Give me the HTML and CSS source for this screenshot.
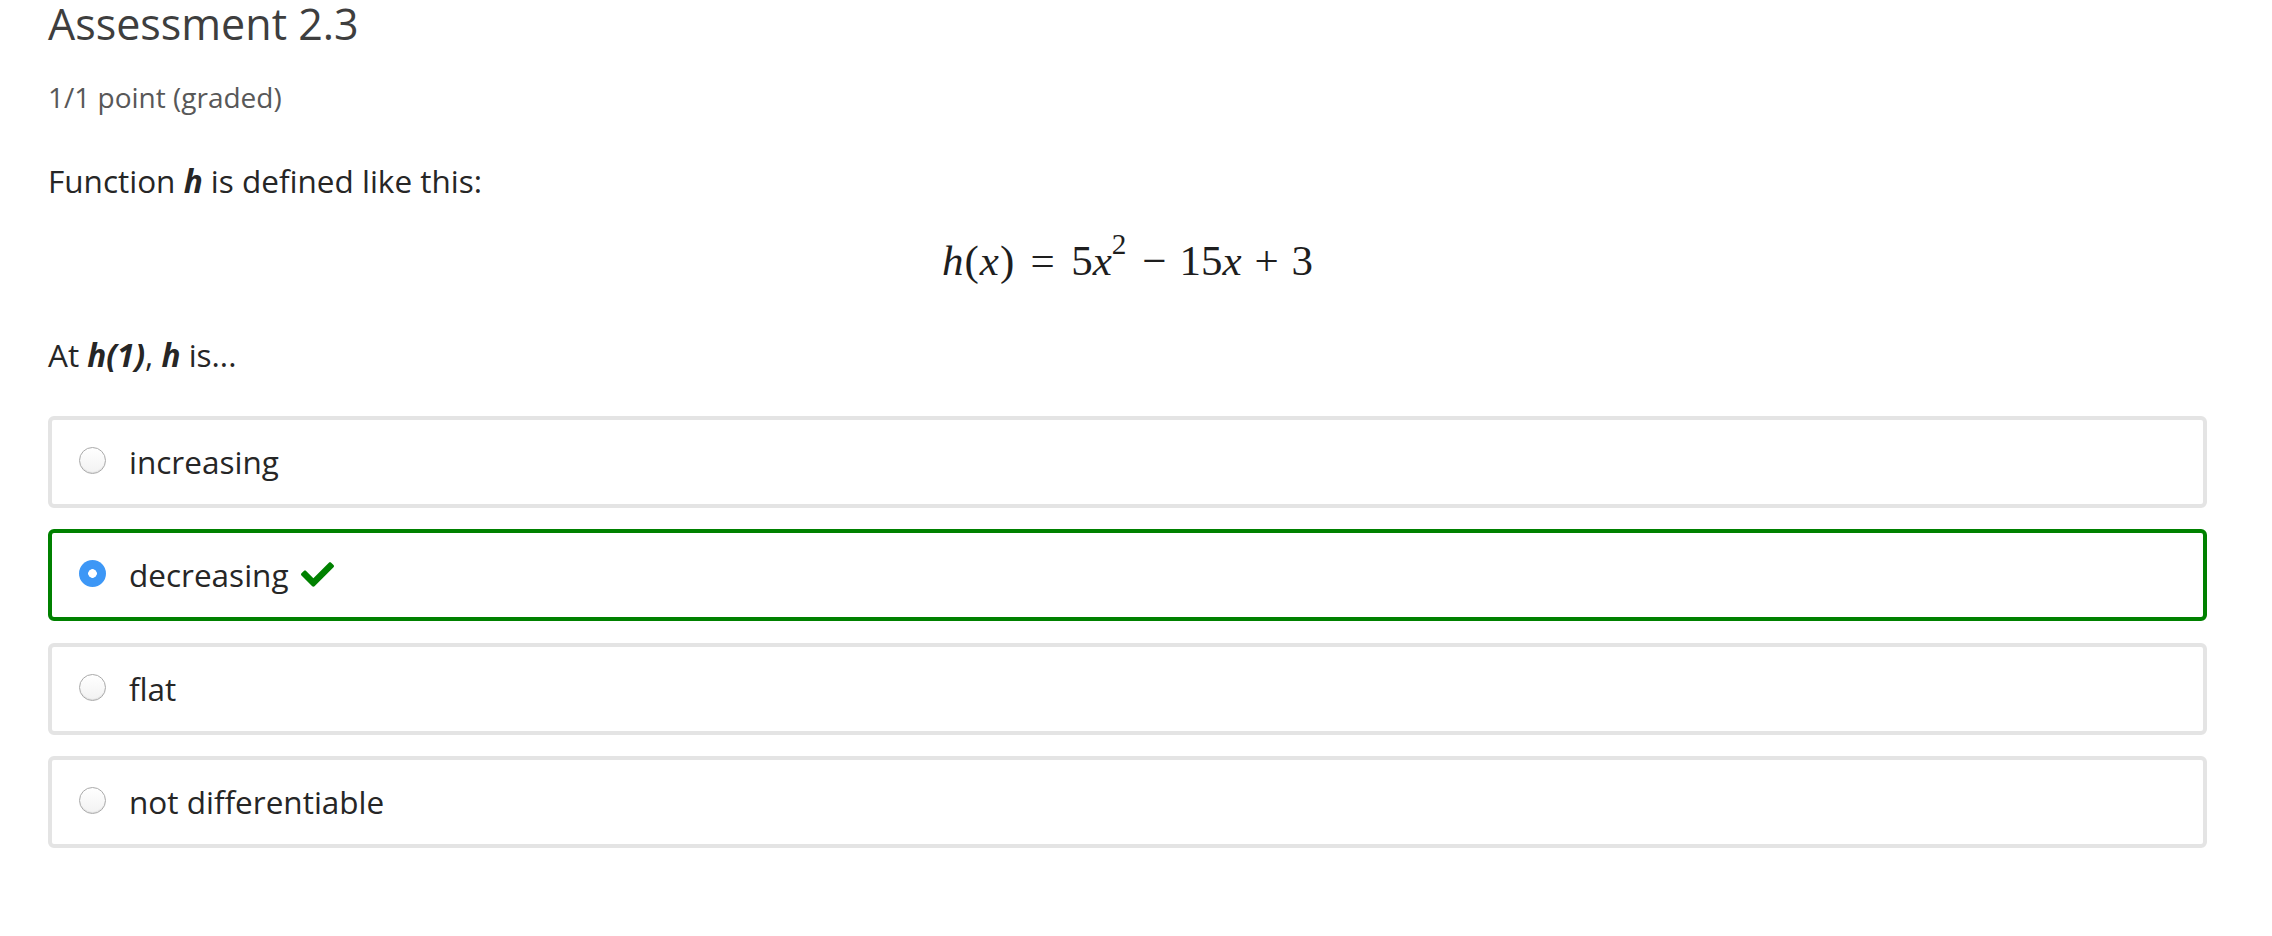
FILE: index.html
```html
<!DOCTYPE html>
<html lang="en">
<head>
<meta charset="utf-8">
<title>Assessment 2.3</title>
<link rel="stylesheet" href="styles.css">
</head>
<body>
<div class="problem">
  <h2 class="problem-title">Assessment 2.3</h2>
  <div class="problem-progress">1/1 point (graded)</div>
  <p class="prompt">Function <b><i>h</i></b> is defined like this:</p>
  <div class="equation"><span class="mi">h</span><span class="mp">(</span><span class="mi">x</span><span class="mp">)</span><span class="rel">=</span><span>5</span><span class="mi">x</span><span class="sup">2</span><span class="op">−</span><span>15</span><span class="mi">x</span><span class="op">+</span><span>3</span></div>
  <p class="prompt question">At <b><i>h(1)</i></b>, <b><i>h</i></b> is...</p>
  <div class="choices">
    <label class="choice">
      <span class="radio"></span>
      <span class="choice-text">increasing</span>
    </label>
    <label class="choice choice-correct">
      <span class="radio radio-checked"></span>
      <span class="choice-text">decreasing</span>
      <svg class="check" viewBox="0 64 512 384" width="33" height="25" aria-hidden="true"><path fill="#008100" d="M173.898 439.404l-166.4-166.4c-9.997-9.997-9.997-26.206 0-36.204l36.203-36.204c9.997-9.998 26.207-9.998 36.204 0L192 312.69 432.095 72.596c9.997-9.997 26.207-9.997 36.204 0l36.203 36.204c9.997 9.997 9.997 26.206 0 36.204l-294.4 294.401c-9.998 9.997-26.207 9.997-36.204-.001z"/></svg>
    </label>
    <label class="choice">
      <span class="radio"></span>
      <span class="choice-text">flat</span>
    </label>
    <label class="choice">
      <span class="radio"></span>
      <span class="choice-text">not differentiable</span>
    </label>
  </div>
</div>
</body>
</html>
```

FILE: styles.css
```css
html, body {
  margin: 0;
  padding: 0;
  background: #ffffff;
}

body {
  font-family: "Open Sans", "Noto Sans", sans-serif;
  color: #313131;
}

.problem {
  padding: 0 65px 0 48px;
}

.problem-title {
  margin: 0;
  font-size: 43px;
  font-weight: 400;
  line-height: 48px;
  color: #3e3e3e;
}

.problem-progress {
  margin-top: 29px;
  font-size: 28px;
  line-height: 40px;
  color: #585858;
}

.prompt {
  margin: 40px 0 0 0;
  font-size: 31.5px;
  line-height: 48px;
  color: #262626;
}

.prompt b {
  font-weight: 700;
}

.question {
  margin-top: 42px;
}

.equation {
  margin-top: 28px;
  text-align: center;
  font-family: "Liberation Serif", "DejaVu Serif", serif;
  font-size: 43px;
  line-height: 56px;
  color: #1e1e1e;
}

.equation .mi {
  font-style: italic;
}

.equation .mi + .mp,
.equation .mp + .mi {
  margin-left: 1px;
}

.equation .rel {
  margin: 0 0.38em;
}

.equation .op {
  margin: 0 0.3em;
}

.equation .sup {
  font-size: 0.68em;
  vertical-align: 0.72em;
  line-height: 0;
  margin-left: 0;
  margin-right: 3px;
}

.choices {
  margin-top: 37px;
  display: flex;
  flex-direction: column;
  gap: 21.33px;
}

.choice {
  box-sizing: border-box;
  height: 92px;
  display: flex;
  align-items: center;
  padding-left: 27px;
  border: 4px solid #e4e4e4;
  border-radius: 6px;
  font-size: 31.5px;
  line-height: 48px;
  color: #262626;
}

.choice-correct {
  border-color: #008100;
}

.radio {
  box-sizing: border-box;
  flex: none;
  width: 27px;
  height: 27px;
  margin-right: 23px;
  margin-bottom: 3px;
  border-radius: 50%;
  border: 1.5px solid #aaaaaa;
  background: linear-gradient(#ffffff, #f2f2f2);
  box-shadow: inset 0 -1px 1px rgba(0, 0, 0, 0.08);
}

.radio-checked {
  border: none;
  background: radial-gradient(circle, #ffffff 0 4px, #3d97f6 4.6px);
  box-shadow: none;
}

.check {
  margin-left: 12px;
  margin-bottom: 2px;
  flex: none;
}
```
